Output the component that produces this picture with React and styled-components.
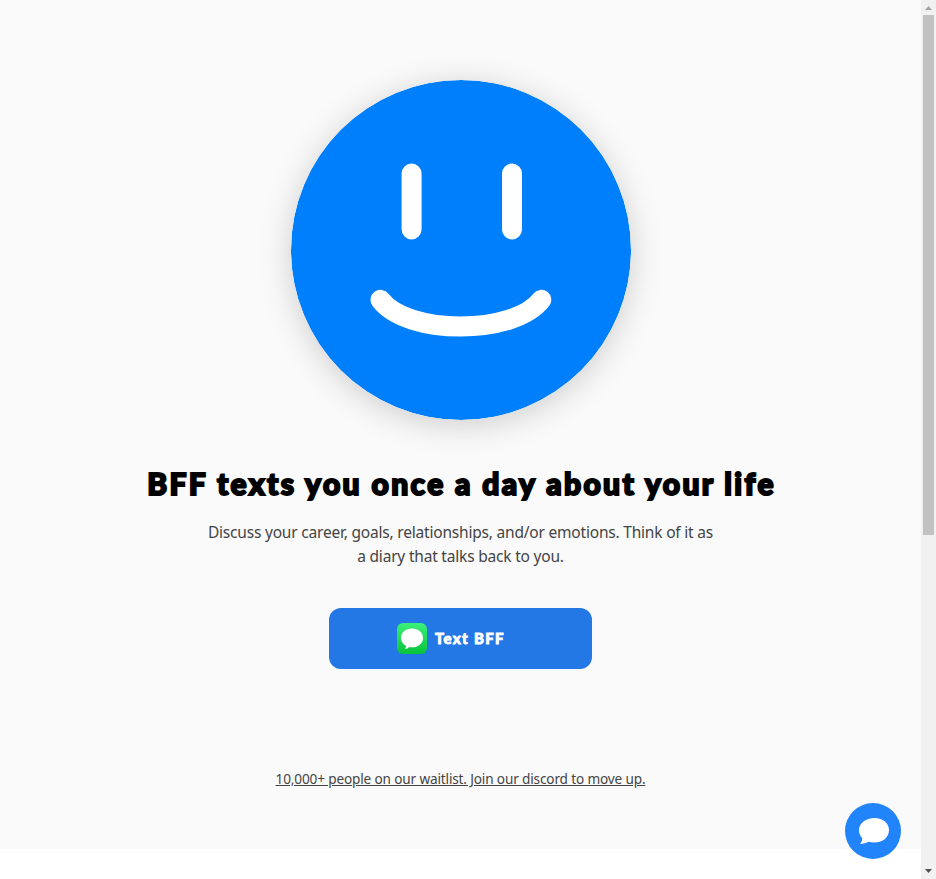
import React from "react";
import styled, { createGlobalStyle } from "styled-components";

const GlobalStyle = createGlobalStyle`
  * { box-sizing: border-box; }
  html, body { margin: 0; height: 879px; overflow: hidden; background: #fff; }
`;

const Window = styled.div`
  display: flex;
  width: 936px;
  height: 879px;
  overflow: hidden;
  position: relative;
`;

const Page = styled.div`
  width: 921px;
  height: 879px;
  background: #fff;
`;

const Hero = styled.main`
  display: flex;
  flex-direction: column;
  align-items: center;
  height: 849px;
  padding-top: 80px;
  background: #fafafa;
`;

const Face = styled.svg`
  display: block;
  flex: none;
  width: 340px;
  height: 340px;
  border-radius: 50%;
  box-shadow: 0 5px 32px rgba(0, 0, 0, 0.18);
`;

const Title = styled.h1`
  margin: 41px 0 0;
  height: 44px;
  padding-left: 2px;
  font: 900 30px/44px Lato, "Open Sans", sans-serif;
  letter-spacing: 2.37px;
  color: #000;
  -webkit-text-stroke: 2px #000;
  white-space: nowrap;
`;

const Description = styled.p`
  margin: 15px 0 0;
  font: 400 15.5px/24px "Noto Sans", sans-serif;
  letter-spacing: -0.2px;
  color: #444;
  text-align: center;
  white-space: nowrap;
`;

const TextButton = styled.button`
  display: flex;
  align-items: center;
  flex: none;
  gap: 8px;
  width: 263px;
  height: 61px;
  margin-top: 40px;
  padding: 0 0 0 68px;
  border: 0;
  border-radius: 12px;
  background: #2478e6;
  color: #fff;
`;

const MessagesIcon = styled.svg`
  display: block;
  flex: none;
  width: 30px;
  height: 31px;
`;

const ButtonLabel = styled.span`
  margin-top: -2px;
  font: 900 15px/24px Lato, sans-serif;
  letter-spacing: 1.3px;
  -webkit-text-stroke: 0.8px #fff;
  white-space: nowrap;
`;

const WaitlistLink = styled.a`
  margin-top: 99px;
  font: 400 13.6px/21px "Noto Sans", sans-serif;
  letter-spacing: -0.15px;
  color: #444;
  text-decoration: underline;
  white-space: nowrap;
`;

const ChatButton = styled.button`
  position: absolute;
  right: 35px;
  bottom: 20px;
  width: 56px;
  height: 56px;
  padding: 0;
  border: 0;
  border-radius: 50%;
  background: #2184fa;
`;

const ChatIcon = styled.svg`
  display: block;
  width: 56px;
  height: 56px;
`;

const Scrollbar = styled.div`
  display: flex;
  flex-direction: column;
  align-items: center;
  width: 15px;
  height: 879px;
  background: #f1f1f1;
`;

const ScrollArrow = styled.svg`
  display: block;
  width: 15px;
  height: 15px;
  fill: ${(p) => p.$color};
`;

const ScrollTrack = styled.div`
  flex: 1;
`;

const ScrollThumb = styled.div`
  width: 11px;
  height: 520px;
  background: #c1c1c1;
`;

export default function App() {
  return (
    <Window>
      <GlobalStyle />
      <Page>
        <Hero>
          <Face viewBox="0 0 340 340">
            <circle cx="170" cy="170" r="170" fill="#007ffc" />
            <g fill="none" stroke="#fff" strokeWidth="20" strokeLinecap="round">
              <path d="M120.6 93.5v56M221 93.5v56" />
              <path d="M89.500 219.800C116 255.500 223 255.500 250.300 219.800" />
            </g>
          </Face>
          <Title>BFF texts you once a day about your life</Title>
          <Description>
            Discuss your career, goals, relationships, and/or emotions. Think of it as
            <br />a diary that talks back to you.
          </Description>
          <TextButton>
            <MessagesIcon viewBox="0 0 30 31">
              <defs>
                <linearGradient id="messages-green" x1="0" y1="0" x2="0" y2="1">
                  <stop offset="0" stopColor="#3cf07c" />
                  <stop offset="1" stopColor="#08c33b" />
                </linearGradient>
              </defs>
              <rect width="30" height="31" rx="6" fill="url(#messages-green)" />
              <path
                d="M15 5.500C8.700 5.500 4 9.600 4 14.900c0 3.400 1.900 6.200 5 7.900-.1 1.300-.3 2.300-1 3.200 1.800 0 3.200-.8 4.300-2 .9.200 1.800.3 2.700.3 6.300 0 11-4.100 11-9.400S21.300 5.500 15 5.500Z"
                fill="#fff"
              />
            </MessagesIcon>
            <ButtonLabel>Text BFF</ButtonLabel>
          </TextButton>
          <WaitlistLink>10,000+ people on our waitlist. Join our discord to move up.</WaitlistLink>
        </Hero>
      </Page>
      <Scrollbar>
        <ScrollArrow viewBox="0 0 15 15" $color="#a3a3a3">
          <path d="M4 10l3.500-4 3.500 4z" />
        </ScrollArrow>
        <ScrollTrack>
          <ScrollThumb />
        </ScrollTrack>
        <ScrollArrow viewBox="0 0 15 15" $color="#505050">
          <path d="M4 5l3.500 4 3.500-4z" />
        </ScrollArrow>
      </Scrollbar>
      <ChatButton aria-label="Open chat">
        <ChatIcon viewBox="0 0 56 56">
          <path
            d="M29.500 15C21 15 14 20 14 27c0 3.500 1.200 6 3.300 8.200-.1 2.300-.8 4-2.300 5.800 3.500-.1 6-.8 8.300-2.200 2 .5 4 .7 6.200.7C38 39.500 44 34 44 27S38 15 29.500 15Z"
            fill="#fff"
          />
        </ChatIcon>
      </ChatButton>
    </Window>
  );
}
